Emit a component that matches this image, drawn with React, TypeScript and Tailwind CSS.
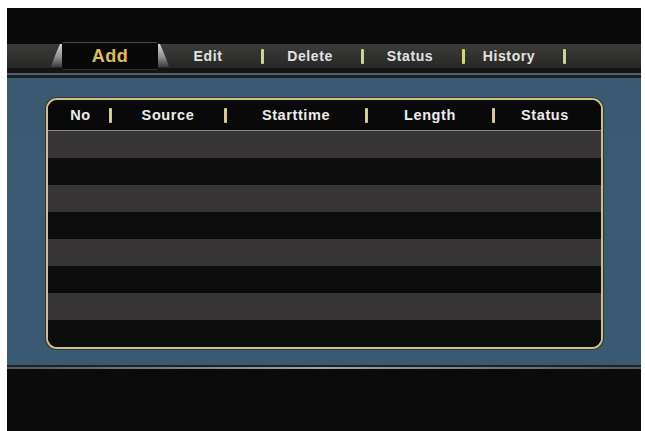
import React from 'react';

const tabs = [
  { label: 'Edit', ml: 'ml-[18px]', w: 'w-[40px]' },
  { label: 'Delete', ml: 'ml-[18px]', w: 'w-[56px]' },
  { label: 'Status', ml: 'ml-[20px]', w: 'w-[52px]' },
  { label: 'History', ml: 'ml-[14px]', w: 'w-[60px]' },
];

const sepGaps = ['ml-[33px]', 'ml-[23px]', 'ml-[26px]', 'ml-[24px]'];

const columns = [
  { label: 'No', w: 'w-[64px]', pl: 'pl-[4px]' },
  { label: 'Source', w: 'w-[115px]', pl: 'pl-0' },
  { label: 'Starttime', w: 'w-[141px]', pl: 'pl-0' },
  { label: 'Length', w: 'w-[127px]', pl: 'pl-0' },
  { label: 'Status', w: 'flex-1', pl: 'pr-[6px]' },
];

const Wedge: React.FC<{ flip?: boolean }> = ({ flip }) => (
  <svg width="12" height="26" viewBox="0 0 12 26" className={flip ? '-scale-x-100' : ''}>
    <defs>
      <linearGradient id={flip ? 'wr' : 'wl'} x1="0" y1="0" x2="0" y2="1">
        <stop offset="0" stopColor="#d8d8d8" />
        <stop offset="0.6" stopColor="#8a8a8a" />
        <stop offset="1" stopColor="#3a3a3a" />
      </linearGradient>
    </defs>
    <path d="M12 1 L10 1 C8 6 4 14 1 24 L12 24 Z" fill={`url(#${flip ? 'wr' : 'wl'})`} />
  </svg>
);

const GoldBar: React.FC<{ className?: string }> = ({ className = '' }) => (
  <span className={`block w-[3px] h-[15px] rounded-[1px] ${className}`} />
);

const App: React.FC = () => {
  return (
    <div className="w-[645px] h-[431px] bg-white pt-[8px] pl-[7px] pr-[4px] font-['Liberation_Sans',Arial,sans-serif]">
      <div className="h-full flex flex-col bg-[#0a0a0a] overflow-hidden">
        {/* top black */}
        <div className="h-[36px] bg-[#0a0a0a]" />

        {/* tab bar */}
        <div className="h-[24px] bg-gradient-to-b from-[#3c3c3a] to-[#272725] flex items-center relative">
          <div className="ml-[43px] flex items-center">
            <Wedge />
            <div className="w-[96px] h-[28px] -my-[2px] bg-[#080808] border-t border-[#4a4a4a] border-b border-b-[#303030] rounded-[2px] flex items-center justify-center">
              <span className="text-[18px] font-bold tracking-[0.5px] text-[#e0bd52] leading-none">Add</span>
            </div>
            <Wedge flip />
          </div>
          {tabs.map((t, i) => (
            <React.Fragment key={t.label}>
              <span className={`${t.ml} ${t.w} text-center text-[14px] font-bold tracking-[0.6px] text-[#e2e2e2] leading-none`}>
                {t.label}
              </span>
              <GoldBar className={`${sepGaps[i]} h-[13px] bg-[#d4d67c]`} />
            </React.Fragment>
          ))}
        </div>

        {/* separator under tabs */}
        <div className="h-[5px] bg-[#141414]" />
        <div className="h-[2px] bg-[#5a5c60]" />
        <div className="h-[3px] bg-[#1a1f24]" />

        {/* blue work area */}
        <div className="h-[287px] bg-gradient-to-b from-[#3b5a72] to-[#3a5a74] pt-[20px] pl-[39px]">
          <div className="w-[557px] rounded-[11px] border-2 border-[#cfc17f] shadow-[0_0_0_1px_#2a3540] bg-[#0c0c0c] overflow-hidden">
            <div className="h-[30px] bg-[#090909] flex items-center">
              {columns.map((c, i) => (
                <div key={c.label} className={`${c.w} ${c.pl} flex items-center`}>
                  <span className="flex-1 text-center text-[14.5px] font-bold tracking-[0.6px] text-[#ececec] leading-none">
                    {c.label}
                  </span>
                  {i < columns.length - 1 && <GoldBar className="bg-[#d8cb8c]" />}
                </div>
              ))}
            </div>
            <div className="h-[1px] bg-[#8a8a8a]" />
            {Array.from({ length: 8 }).map((_, i) => (
              <div
                key={i}
                className={`h-[27px] ${i % 2 === 0 ? 'bg-[#363434]' : 'bg-[#0d0c0c]'}`}
              />
            ))}
          </div>
        </div>

        {/* separator above bottom */}
        <div className="h-[2px] bg-[#1c2228]" />
        <div className="h-[2px] bg-gradient-to-r from-[#55575c] via-[#a0a2a8] to-[#55575c]" />
        <div className="flex-1 bg-[#0b0b0b]" />
      </div>
    </div>
  );
};

export default App;
